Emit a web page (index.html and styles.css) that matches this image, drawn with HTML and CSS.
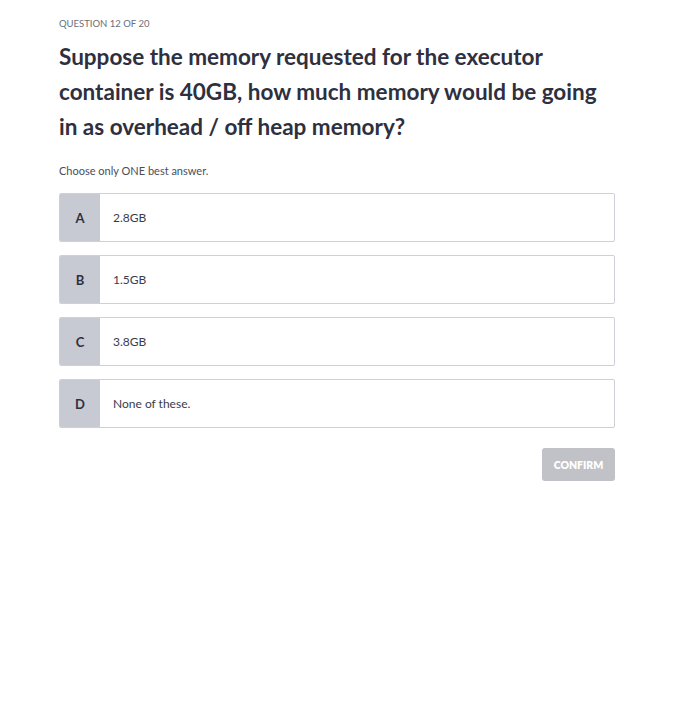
FILE: index.html
```html
<!DOCTYPE html>
<html>
<head>
<meta charset="utf-8">
<link rel="stylesheet" href="styles.css">
</head>
<body>
<div class="quiz">
  <div class="counter">QUESTION 12 OF 20</div>
  <h1 class="question">Suppose the memory requested for the executor container is 40GB, how much memory would be going in as overhead / off heap memory?</h1>
  <div class="hint">Choose only ONE best answer.</div>
  <div class="options">
    <div class="option"><div class="letter">A</div><div class="text">2.8GB</div></div>
    <div class="option"><div class="letter">B</div><div class="text">1.5GB</div></div>
    <div class="option"><div class="letter">C</div><div class="text">3.8GB</div></div>
    <div class="option"><div class="letter">D</div><div class="text">None of these.</div></div>
  </div>
  <div class="actions"><button class="confirm">CONFIRM</button></div>
</div>
</body>
</html>
```
FILE: styles.css
```css
* { box-sizing: border-box; }
body {
  margin: 0;
  background: #fff;
  font-family: Lato, "Open Sans", sans-serif;
  color: #2e3040;
}
.quiz {
  width: 556px;
  margin-left: 59px;
  padding-top: 18px;
}
.counter {
  font-size: 9.5px;
  color: #6b6e7a;
  line-height: 12px;
}
.question {
  max-width: 545px;
  margin: 9px 0 0;
  font-size: 22.5px;
  font-weight: 700;
  line-height: 35px;
  color: #2e3040;
}
.hint {
  margin-top: 20px;
  font-size: 11px;
  color: #4a4d5a;
  line-height: 14px;
}
.options {
  margin-top: 15px;
  display: flex;
  flex-direction: column;
  gap: 13px;
}
.option {
  display: flex;
  height: 49px;
  border: 1px solid #cfd0d6;
  border-radius: 2px;
  overflow: hidden;
}
.letter {
  width: 40px;
  background: #c8cad3;
  display: flex;
  align-items: center;
  justify-content: center;
  font-size: 13px;
  font-weight: 700;
  color: #2e3040;
}
.text {
  display: flex;
  align-items: center;
  padding-left: 13px;
  font-size: 12px;
  color: #3a3c48;
}
.actions {
  display: flex;
  justify-content: flex-end;
  margin-top: 20px;
}
.confirm {
  width: 73px;
  height: 33px;
  border: none;
  border-radius: 3px;
  background: #c1c2c8;
  color: #fff;
  font-family: Lato, sans-serif;
  font-size: 10.5px;
  font-weight: 800;
  padding: 0;
}
```
